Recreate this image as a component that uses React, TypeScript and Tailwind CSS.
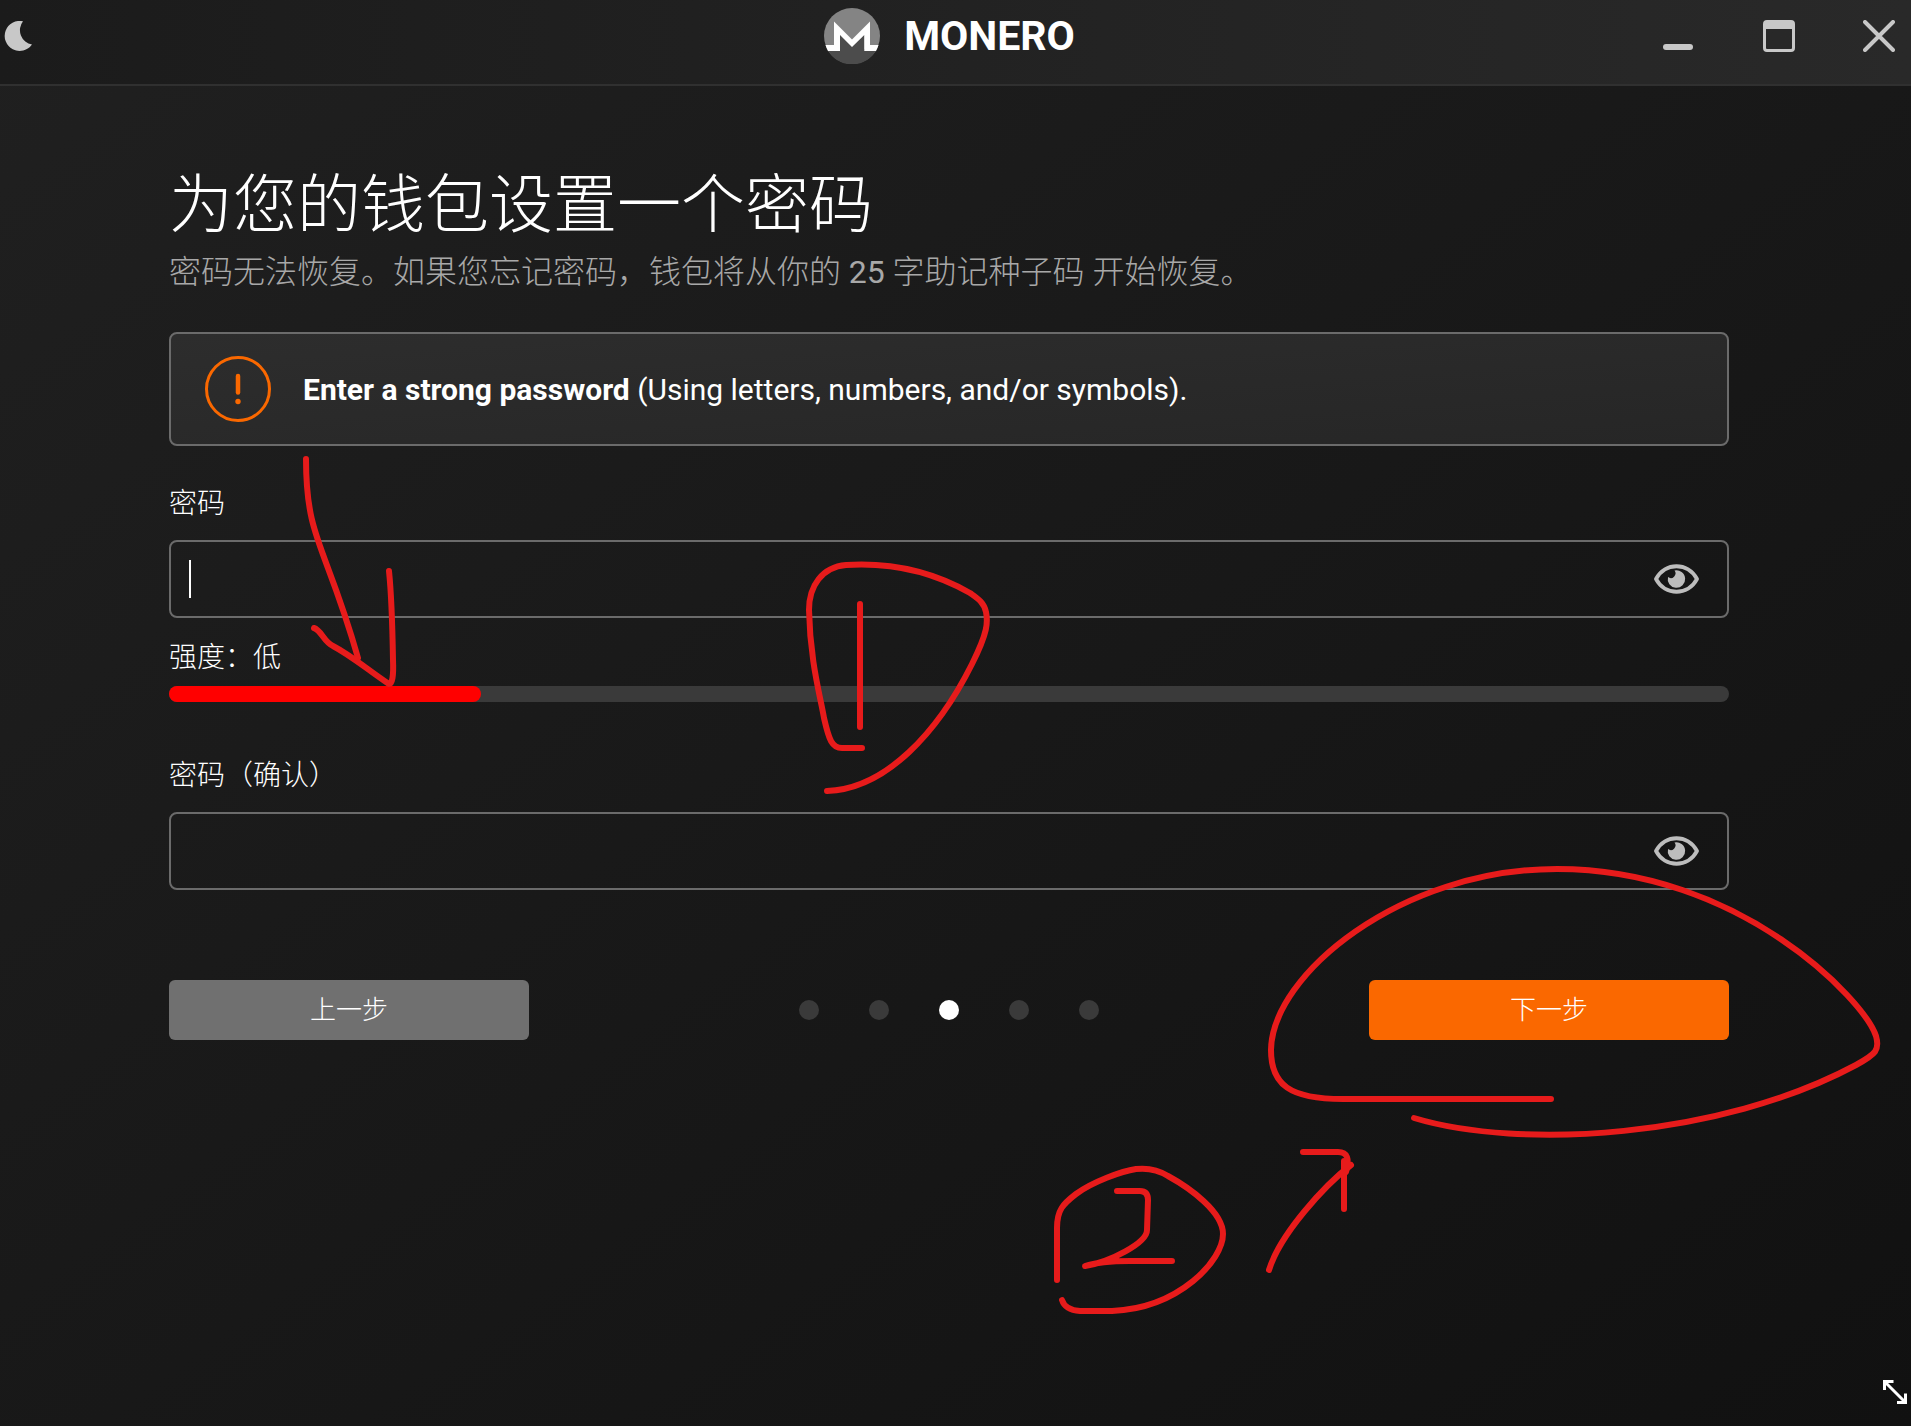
import { ReactNode } from 'react';

const strokes = [
  // arrow to the strength bar
  'M306 459 C306 540 326 545 358 658',
  'M314 628 C321 630 324 642 333 646 C352 656 368 670 389 684 Q394 684 393 660 Q392 600 389 571',
  // step 1
  'M827 791 C886 789 938 732 972 664 C988 632 988 622 986 612 C984 602 977 598 970 593 C935 573 895 562 846 565 C822 567 809 586 809 610 C810 660 820 695 824 718 C829 740 832 748 842 748 H862',
  'M860 604 V727',
  // ring around the next button
  'M1414 1118 C1520 1150 1720 1138 1856 1065 C1876 1054 1880 1050 1876 1036 C1864 1000 1740 869 1557 869 C1400 869 1272 975 1271 1050 C1271 1085 1290 1099 1343 1099 H1551',
  // arrow to the ring
  'M1269 1270 C1280 1234 1325 1185 1351 1165',
  'M1303 1152 H1338 Q1352 1152 1346 1172',
  'M1344 1161 V1209',
  // step 2
  'M1057 1280 V1228 C1057 1210 1063 1204 1076 1194 C1092 1182 1122 1171 1136 1169 Q1154 1167 1168 1176 C1190 1188 1223 1212 1223 1234 C1223 1260 1180 1308 1112 1311 H1080 Q1065 1310 1062 1300',
  'M1117 1191 H1140 Q1148 1191 1148 1200 L1147 1230 C1147 1243 1110 1262 1085 1266 Q1100 1261 1130 1261 H1172',
];

function Annotations() {
  return (
    <svg className="absolute top-0 left-0 pointer-events-none" width="1911" height="1426" viewBox="0 0 1911 1426" fill="none" stroke="#e71b1b" strokeWidth="6" strokeLinecap="round" strokeLinejoin="round" aria-hidden="true">
      {strokes.map((d) => (
        <path key={d} d={d} />
      ))}
    </svg>
  );
}

function MoneroLogo() {
  return (
    <svg width="56" height="56" viewBox="0 0 56 56" aria-hidden="true">
      <circle cx="28" cy="28" r="28" fill="#848484" />
      <path d="M3 41 L16 41 L16 26 L28 37 L40 26 L40 41 L53 41 A28 28 0 0 1 3 41Z" fill="#4c4c4c" />
      <path d="M10 13.5 L28 31.5 L46 13.5 V37 H54.5 A28 28 0 0 1 52 43 H40.3 V27 L28 39 L16 27 V43 H4 A28 28 0 0 1 1.5 37 H10Z" fill="#fff" />
    </svg>
  );
}

function EyeIcon() {
  return (
    <svg width="45" height="30" viewBox="0 0 45 30" aria-hidden="true">
      <path d="M2 15 C11 -2 34 -2 43 15 C34 32 11 32 2 15Z" fill="none" stroke="#bdbdbd" strokeWidth="3.8" strokeLinejoin="round" />
      <path d="M20.5 6.6 A8.7 8.7 0 1 1 14 13 A4.6 4.6 0 0 0 20.5 6.6Z" fill="#bdbdbd" />
    </svg>
  );
}

function PasswordInput({ id, children }: { id: string; children?: ReactNode }) {
  return (
    <div className="relative flex items-center h-[78px] rounded-lg border-2 border-[#6b6b6b] pl-[18px] pr-7">
      {children}
      <input id={id} type="password" className="flex-1 min-w-0 h-full bg-transparent text-[28px] text-white outline-none" />
      <button type="button" aria-label="显示密码">
        <EyeIcon />
      </button>
    </div>
  );
}

export default function App() {
  return (
    <div className="relative overflow-hidden min-h-screen flex flex-col bg-linear-to-br from-[#202020] to-[#111111] text-white font-[Roboto,'Noto_Sans_CJK_SC',sans-serif]">
      <header className="grid grid-cols-[1fr_auto_1fr] items-center h-[86px] pl-1 pr-4 pb-[12px] border-b-2 border-[#303030] bg-linear-to-r from-[#1b1b1b] to-[#292929]">
        <button type="button" aria-label="主题" className="justify-self-start">
          <svg width="28" height="30" viewBox="0 0 28 30" aria-hidden="true">
            <path d="M19 0.3 A15 15 0 1 0 28 23.5 A14.5 14.5 0 0 1 19 0.3Z" fill="#c8c8c8" />
          </svg>
        </button>

        <div className="flex items-center gap-6">
          <MoneroLogo />
          <span className="text-[41px] leading-none font-bold">MONERO</span>
        </div>

        <div className="justify-self-end flex items-center gap-[68px]">
          <button type="button" aria-label="最小化">
            <svg width="32" height="32" viewBox="0 0 32 32" aria-hidden="true">
              <rect x="0" y="24" width="30" height="6" rx="3" fill="#c8c8c8" />
            </svg>
          </button>
          <button type="button" aria-label="最大化">
            <svg width="32" height="32" viewBox="0 0 32 32" aria-hidden="true">
              <rect x="1.5" y="1.5" width="29" height="29" rx="2.5" fill="none" stroke="#c8c8c8" strokeWidth="3" />
              <rect x="1" y="1" width="30" height="8" rx="2" fill="#c8c8c8" />
            </svg>
          </button>
          <button type="button" aria-label="关闭">
            <svg width="32" height="32" viewBox="0 0 32 32" aria-hidden="true">
              <path d="M2 2 L30 30 M30 2 L2 30" stroke="#c8c8c8" strokeWidth="4" strokeLinecap="round" />
            </svg>
          </button>
        </div>
      </header>

      <main className="flex flex-col pt-[84px] pl-[169px] pr-[182px]">
        <h1 className="text-[64px] leading-[72px] font-light">为您的钱包设置一个密码</h1>
        <p className="mt-[10px] text-[32px] leading-[40px] font-light text-[#a8a8a8]">
          密码无法恢复。如果您忘记密码，钱包将从你的 <span className="font-normal">25</span> 字助记种子码 开始恢复。
        </p>

        <div className="mt-10 h-[114px] flex items-center gap-8 pl-[34px] rounded-lg border-2 border-[#6b6b6b] bg-linear-to-br from-[#2d2d2d] to-[#262626]">
          <svg width="66" height="66" viewBox="0 0 66 66" aria-hidden="true">
            <circle cx="33" cy="33" r="31.5" fill="none" stroke="#fa6800" strokeWidth="3" />
            <path d="M33 20 V36.5" stroke="#fa6800" strokeWidth="4.5" strokeLinecap="round" />
            <circle cx="33" cy="45.5" r="2.7" fill="#fa6800" />
          </svg>
          <p className="pt-[2px] text-[30px] leading-[40px]">
            <b>Enter a strong password</b> (Using letters, numbers, and/or symbols).
          </p>
        </div>

        <label htmlFor="password" className="mt-10 mb-[18px] text-[28px] leading-[36px] font-light">密码</label>
        <PasswordInput id="password">
          <span className="absolute left-[18px] w-[2px] h-[38px] bg-white" />
        </PasswordInput>

        <div id="strength" className="mt-[22px] text-[28px] leading-[36px] font-light">强度：低</div>
        <div role="progressbar" aria-labelledby="strength" aria-valuenow={20} className="mt-[10px] h-4 rounded-full bg-[#3a3a3a]">
          <div className="h-full w-1/5 rounded-full bg-[#ff0000]" />
        </div>

        <label htmlFor="confirm" className="mt-14 mb-[18px] text-[28px] leading-[36px] font-light">密码（确认）</label>
        <PasswordInput id="confirm" />

        <div className="mt-[90px] flex items-center justify-between">
          <button type="button" className="w-[360px] h-[60px] rounded-md bg-[#707070] text-[26px] font-light">上一步</button>
          <div className="flex gap-[50px]">
            {[0, 1, 2, 3, 4].map((step) => (
              <span key={step} className={step === 2 ? 'size-5 rounded-full bg-white' : 'size-5 rounded-full bg-[#3a3a3a]'} />
            ))}
          </div>
          <button type="button" className="w-[360px] h-[60px] rounded-md bg-[#fa6800] text-[26px] font-light">下一步</button>
        </div>
      </main>

      <footer className="mt-auto flex justify-end pr-1 pb-[22px]">
        <svg width="24" height="24" viewBox="0 0 24 24" fill="none" stroke="#fff" strokeWidth="3" aria-hidden="true">
          <path d="M2 2 L22 22 M1.5 10 V1.5 H10.5 M22.5 13.5 V22.5 H14" />
        </svg>
      </footer>

      <Annotations />
    </div>
  );
}
